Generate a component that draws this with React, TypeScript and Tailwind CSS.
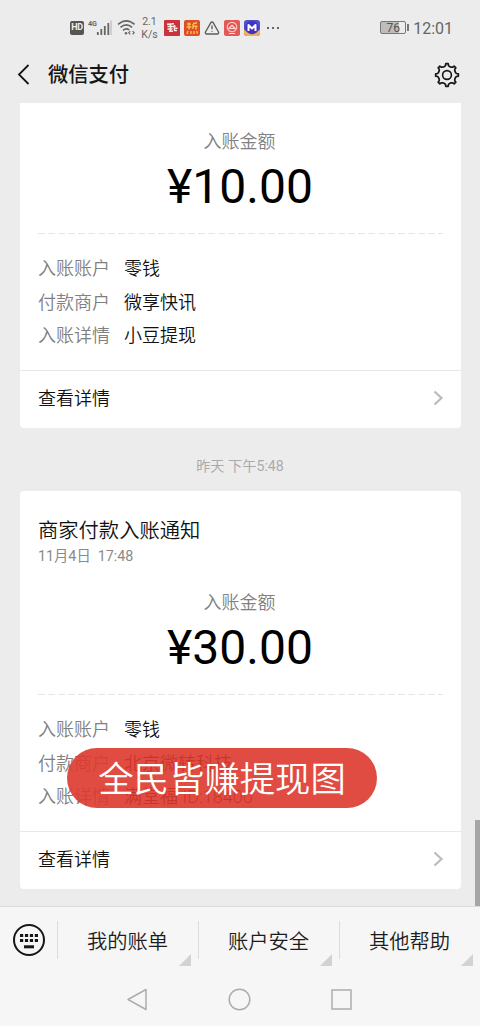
import { LuTriangleAlert } from "react-icons/lu";

type Detail = {
  label: string;
  value: string;
};

type Payment = {
  id: number;
  title?: string;
  date?: string;
  amount: string;
  details: Detail[];
};

const payments: Payment[] = [
  {
    id: 1,
    amount: "¥10.00",
    details: [
      { label: "入账账户", value: "零钱" },
      { label: "付款商户", value: "微享快讯" },
      { label: "入账详情", value: "小豆提现" },
    ],
  },
  {
    id: 2,
    title: "商家付款入账通知",
    date: "11月4日  17:48",
    amount: "¥30.00",
    details: [
      { label: "入账账户", value: "零钱" },
      { label: "付款商户", value: "北京微转科技" },
      { label: "入账详情", value: "满堂福 ID:18400" },
    ],
  },
];

const menus = ["我的账单", "账户安全", "其他帮助"];

// outline of an eight-tooth gear: [angle offset, radius] for each tooth
const tooth = [
  [-16, 8.9],
  [-9, 9.6],
  [-6, 11.4],
  [6, 11.4],
  [9, 9.6],
  [16, 8.9],
];

const gearPoints = Array.from({ length: 8 })
  .flatMap((_, i) =>
    tooth.map(([offset, radius]) => {
      const angle = ((i * 45 + offset) * Math.PI) / 180;
      return `${(13 + radius * Math.sin(angle)).toFixed(2)},${(13 - radius * Math.cos(angle)).toFixed(2)}`;
    })
  )
  .join(" ");

function GearIcon() {
  return (
    <svg width="26" height="26" viewBox="0 0 26 26" fill="none" stroke="#161616">
      <polygon points={gearPoints} strokeWidth="1.7" strokeLinejoin="round" />
      <circle cx="13" cy="13" r="4.4" strokeWidth="1.6" />
    </svg>
  );
}

function StatusBar() {
  return (
    <div className="flex h-12 items-center pl-[70px] pr-[27px] pt-[7px] text-[#666]">
      <div className="flex h-[14px] w-[14px] items-center justify-center rounded-[2px] bg-[#555] text-[9px] font-bold tracking-tighter text-[#eee]">
        HD
      </div>
      <svg className="ml-[4px]" width="25" height="18" viewBox="0 0 25 18">
        <text x="0" y="7" fontSize="8" fontWeight="700" fill="#666" textLength="9" lengthAdjust="spacingAndGlyphs">
          4G
        </text>
        <path d="M9.8 16v-3M13.3 16v-6M16.8 16V7M20.3 16V4" stroke="#666" strokeWidth="1.8" />
        <path d="M23 16V1.5" stroke="#c4c4c4" strokeWidth="1.5" />
      </svg>
      <svg className="ml-[4px]" width="19" height="17" viewBox="0 0 19 17" fill="none" stroke="#666" strokeWidth="1.6">
        <path d="M1 5.4Q9.3-1.8 17.6 5.4M3.5 8.4Q9.3 3.4 15.1 8.4M6 11.3Q9.3 8.6 12.3 11" />
        <circle cx="9" cy="14.2" r="1.3" fill="#666" stroke="none" />
        <path d="M13.3 12.1l-1.5 1.6 1.5 1.6M15.6 12.1l1.5 1.6-1.5 1.6" strokeWidth="1.2" />
      </svg>
      <div className="ml-[5px] w-[17px] text-center text-[10.5px] leading-[13px]">
        <div>2.1</div>
        <div>K/s</div>
      </div>
      <svg className="ml-[6px]" width="16" height="16" viewBox="0 0 16 16">
        <rect width="16" height="16" rx="1" fill="#c7343b" />
        <path
          d="M3 4.3l7-.6M3.5 6.5h8M3.5 9h5M5 11.3h4M6.5 4.5v7M10.5 5v5.5h2.5M11.5 8.2h2"
          fill="none"
          stroke="#fbe9e7"
          strokeWidth="1.5"
        />
      </svg>
      <svg className="ml-[4px]" width="16" height="16" viewBox="0 0 16 16">
        <rect width="16" height="16" rx="2" fill="#dd4f28" />
        <path
          d="M3 4h4M5 2.5v7M2.5 7h5M9 3.8l4-1M9 4v5M9 6.3h4.5M12 6.5v3M4 11l-1 3M7 11v3M10 11v3M12.5 11l1 2.5"
          fill="none"
          stroke="#ffc04c"
          strokeWidth="1.4"
        />
      </svg>
      <LuTriangleAlert className="ml-[4px] h-4 w-4 text-[#5c5c5c]" />
      <svg className="ml-[4px]" width="16" height="16" viewBox="0 0 16 16">
        <rect width="16" height="16" rx="2" fill="#e25a58" />
        <circle cx="8" cy="7" r="4.7" fill="none" stroke="#ffc8bb" strokeWidth="1.2" />
        <path d="M4.5 9L8 5.3 11.5 9M6.3 8.5h4M5 13.5h6" fill="none" stroke="#ffe0d8" strokeWidth="1.2" />
      </svg>
      <svg className="ml-[4px]" width="16" height="16" viewBox="0 0 16 16">
        <rect width="16" height="16" rx="3" fill="#4a51d0" />
        <path d="M0 9.5q8 8 16 0V13a3 3 0 0 1-3 3H3a3 3 0 0 1-3-3z" fill="#efb052" />
        <circle cx="8" cy="7.6" r="6.6" fill="#4431c4" />
        <path d="M4.5 11V5L8 8.5 11.5 5v6" fill="none" stroke="#fff" strokeWidth="2" strokeLinejoin="round" />
      </svg>
      <div className="ml-[7px] flex gap-[3px]">
        <i className="h-[2px] w-[2px] bg-[#666]" />
        <i className="h-[2px] w-[2px] bg-[#666]" />
        <i className="h-[2px] w-[2px] bg-[#666]" />
      </div>
      <div className="ml-auto flex items-center">
        <div className="flex h-[13px] w-[26px] items-center justify-center rounded-[2px] border border-[#777] bg-[linear-gradient(90deg,#bdbdbd_76%,#ececec_76%)] text-[12px] leading-none text-[#555]">
          76
        </div>
        <i className="ml-px h-[7px] w-[2px] bg-[#777]" />
        <span className="ml-[4px] pt-[2px] text-[16px] leading-5">12:01</span>
      </div>
    </div>
  );
}

function PaymentCard({ payment }: { payment: Payment }) {
  return (
    <div className="mx-5 w-[441px] rounded-b-[4px] bg-white [&:not(:first-child)]:rounded-t-[4px]">
      {payment.title && (
        <div className="h-[73px] px-[18px] pt-[25px]">
          <h2 className="text-[20.3px] font-[350] leading-[30px] text-[#111]">{payment.title}</h2>
          <p className="whitespace-pre text-[14.3px] leading-[20px] text-[#8a8a8a]">{payment.date}</p>
        </div>
      )}
      <div className="px-[18px] pb-[17.5px] pt-[27px]">
        <p className="mr-[2px] text-center text-[18px] font-[350] leading-6 text-[#808080]">入账金额</p>
        <p className="mr-px mt-[5px] text-center text-[48px] leading-[56px] text-black">{payment.amount}</p>
        <div className="mt-[18px] h-px bg-[repeating-linear-gradient(90deg,#e6e6e6_0_7px,#fff_7px_10px)]" />
        <div className="mt-[18px]">
          {payment.details.map((detail) => (
            <div key={detail.label} className="flex h-[33.5px] items-center text-[18px] font-[350]">
              <span className="w-[86px] text-[#808080]">{detail.label}</span>
              <span className="text-[#111]">{detail.value}</span>
            </div>
          ))}
        </div>
      </div>
      <div className="flex h-[58px] items-center justify-between border-t border-[#e8e8e8] pb-[3px] pl-[18px] pr-[17px] text-[18px] font-[350] text-[#111]">
        <span>查看详情</span>
        <svg width="11" height="16" viewBox="0 0 11 16" fill="none" stroke="#bbb" strokeWidth="2.2">
          <path d="M1.5 1.5L8.5 8l-7 6.5" />
        </svg>
      </div>
    </div>
  );
}

export default function App() {
  return (
    <div className="relative flex h-[1026px] w-[480px] flex-col overflow-hidden bg-[#ececec] font-[Roboto,'Noto_Sans_CJK_SC',sans-serif]">
      <StatusBar />
      <header className="flex h-[55px] items-center pb-[2px] pl-[17px] pr-5">
        <svg width="13" height="21" viewBox="0 0 13 21" fill="none" stroke="#161616" strokeWidth="1.8">
          <path d="M11.5 1L2 10.5l9.5 9.5" />
        </svg>
        <h1 className="ml-[18px] pt-[2px] text-[20.3px] font-medium text-[#161616]">微信支付</h1>
        <div className="ml-auto">
          <GearIcon />
        </div>
      </header>

      <main className="relative h-[803px]">
        <PaymentCard payment={payments[0]} />
        <p className="flex h-[63px] items-center justify-center pt-[14px] text-[14.2px] text-[#ababab]">
          昨天 下午5:48
        </p>
        <PaymentCard payment={payments[1]} />

        {/* scrollbar */}
        <div className="absolute bottom-0 right-0 h-[86px] w-[5px] bg-[#a6a6a6]" />
      </main>

      <nav className="flex h-[67px] items-center border-t border-[#dcdcdc] bg-[#f6f6f6]">
        <div className="flex h-[38px] w-[58px] items-center border-r border-[#dcdcdc] pl-[13px]">
          <svg width="32" height="32" viewBox="0 0 32 32" fill="none" stroke="#161616">
            <circle cx="16" cy="16" r="15" strokeWidth="2" />
            <path d="M7 11.5h18M7 16.5h18" strokeWidth="3.2" strokeDasharray="3.2 1.73" />
            <path d="M11 22.8h10" strokeWidth="3" />
          </svg>
        </div>
        {menus.map((menu) => (
          <div
            key={menu}
            className="relative flex h-[38px] flex-1 items-center justify-center border-r border-[#dcdcdc] pr-px pt-[5px] text-[20.3px] font-[350] text-[#1c1c1c] last:border-r-0"
          >
            {menu}
            <i className="absolute -bottom-[7px] right-[7px] h-[12px] w-[12px] bg-[#d2d2d2] [clip-path:polygon(100%_0,100%_100%,0_100%)]" />
          </div>
        ))}
      </nav>

      <footer className="flex flex-1 justify-center gap-[79px] bg-[#f6f6f6] pr-px pt-[15px]">
        <svg width="23" height="23" viewBox="0 0 23 23" fill="none" stroke="#adadad" strokeWidth="1.5">
          <path d="M20 1.5v20L2 11.5z" strokeLinejoin="round" />
        </svg>
        <svg width="23" height="23" viewBox="0 0 23 23" fill="none" stroke="#adadad" strokeWidth="1.5">
          <circle cx="11.5" cy="11.5" r="10.3" />
        </svg>
        <svg width="23" height="23" viewBox="0 0 23 23" fill="none" stroke="#adadad" strokeWidth="1.5">
          <rect x="2" y="2" width="19" height="19" />
        </svg>
      </footer>

      {/* caption floating over the last card */}
      <div className="absolute left-[67px] top-[748px] flex h-[60px] w-[310px] items-center justify-center rounded-full bg-[#de382d]/90 pt-[5px] text-[35.4px] font-[350] text-white">
        全民皆赚提现图
      </div>
    </div>
  );
}
